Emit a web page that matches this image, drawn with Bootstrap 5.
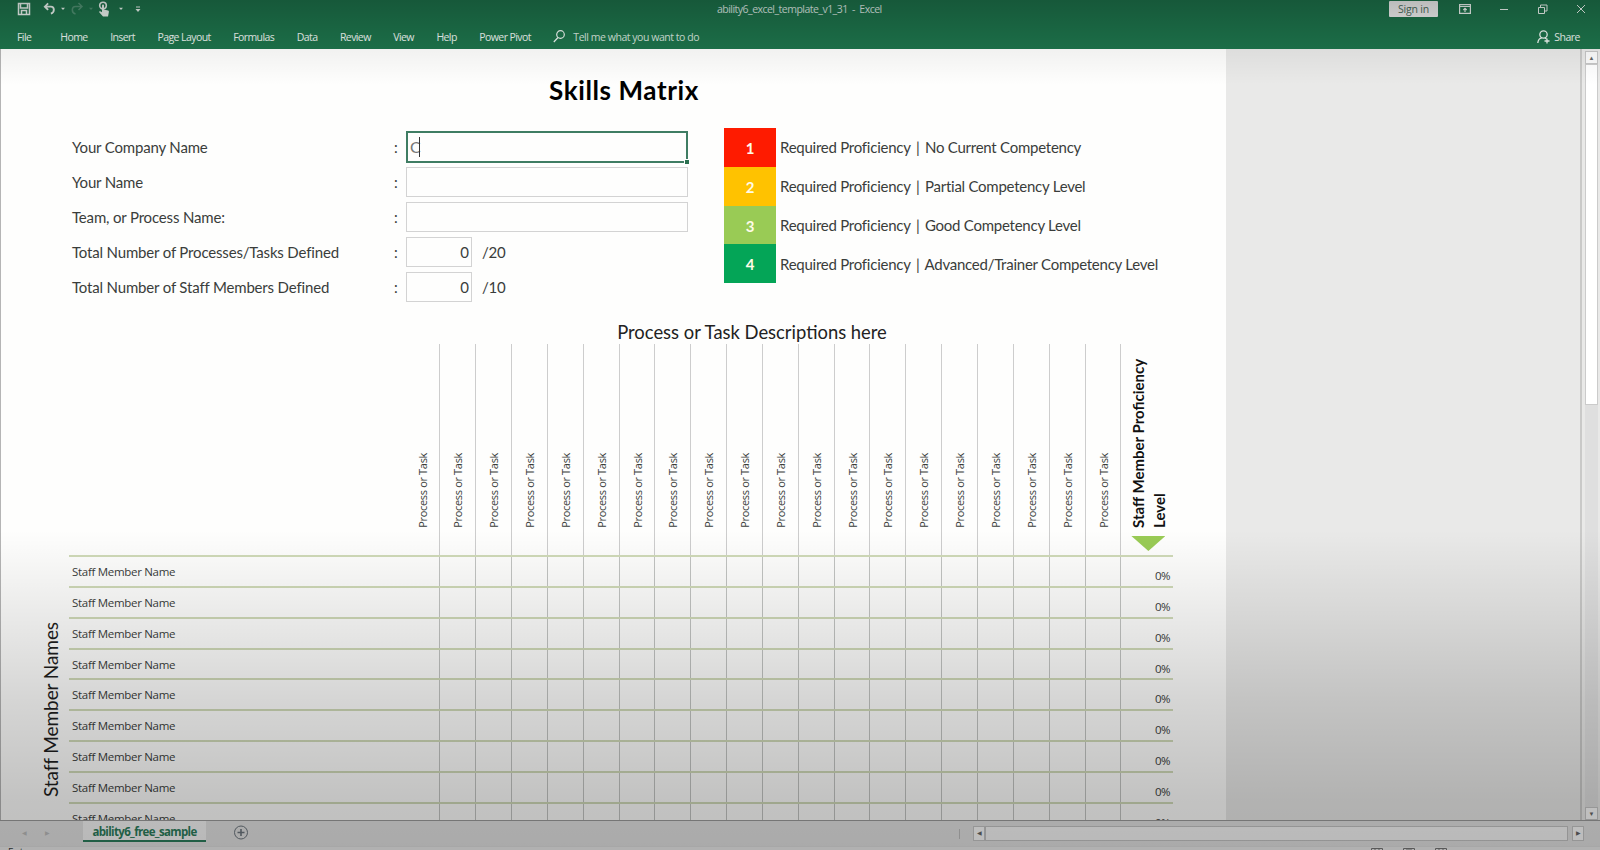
<!DOCTYPE html>
<html lang="en">
  <head>
    <meta charset="utf-8" />
    <title>ability6_excel_template_v1_31 - Excel</title>
    <link
      href="https://cdn.jsdelivr.net/npm/bootstrap@5.3.3/dist/css/bootstrap.min.css"
      rel="stylesheet"
    />
    <style>
      body {
        width: 1600px;
        height: 850px;
        overflow: hidden;
        font-family: Lato, "Open Sans", sans-serif;
        color: #3a3d3b;
        background: #e9e9e8;
      }
      svg {
        display: block;
        fill: none;
        stroke: currentColor;
      }

      /* ribbon */
      .ribbon {
        height: 49px;
        background: #1d734b;
        color: #eef7f2;
        font-family: "Open Sans", sans-serif;
        font-size: 10.5px;
        line-height: 14px;
      }
      .title-row {
        height: 18px;
      }
      .quick {
        width: 717px;
        padding-left: 17px;
      }
      .doc-title {
        letter-spacing: -0.52px;
        color: #dbe9e1;
        white-space: pre;
      }
      .sign-in {
        width: 49px;
        height: 16px;
        padding: 0;
        font-size: 10.5px;
        line-height: 15px;
        letter-spacing: -0.2px;
        background: #f3f3f3;
        color: #4f6f60;
        border-radius: 1px;
      }
      .window-icons {
        gap: 28px;
        margin-left: 21px;
        margin-right: 14px;
      }
      .tab-row {
        height: 31px;
        padding-left: 17px;
        padding-top: 6px;
      }
      .tab-row .nav-link {
        padding: 0;
        margin-right: 22.5px;
        color: #eef7f2;
        letter-spacing: -0.58px;
      }
      .tab-row .nav-link.file-tab {
        margin-right: 29px;
      }
      .tell-me {
        letter-spacing: -0.46px;
        color: #d5e6dd;
      }
      .share-link {
        margin-right: 20px;
        letter-spacing: -0.5px;
      }

      /* worksheet */
      .workspace {
        height: 772px;
        border-bottom: 1px solid #9b9b9b;
      }
      .sheet {
        width: 1226px;
        background: #fefefd;
        border-left: 1px solid #b5b5b5;
        overflow: hidden;
      }
      .sheet-title {
        height: 79px;
        padding-top: 22px;
        padding-left: 21px;
        font-size: 26px;
        line-height: 38px;
        letter-spacing: 0.6px;
        color: #000;
      }
      .form-block {
        width: 723px;
        height: 197px;
        padding-left: 71px;
        padding-top: 1px;
        font-size: 15px;
      }
      .form-line {
        height: 35px;
      }
      .form-line .caption-text {
        width: 322px;
        padding-top: 2px;
        letter-spacing: -0.17px;
      }
      .colon {
        width: 12px;
        padding-top: 2px;
      }
      .unit {
        padding-top: 2px;
        letter-spacing: -0.2px;
      }
      .entry {
        width: 282px;
        height: 30px;
        border: 1px solid #d3d3d3;
        line-height: 28px;
        padding: 0 2px;
      }
      .entry.count {
        width: 66px;
        text-align: right;
        margin-right: 10px;
      }
      .entry.active {
        height: 32px;
        border: 2px solid #3f7d63;
        padding: 0 2px;
        font-size: 16px;
        color: #777;
        position: relative;
      }
      .caret {
        width: 1px;
        height: 20px;
        margin-top: 4px;
        margin-left: -2px;
        background: #333;
      }
      .fill-handle {
        position: absolute;
        right: -3px;
        bottom: -3px;
        width: 5px;
        height: 5px;
        background: #2b7050;
        border-left: 1px solid #fff;
        border-top: 1px solid #fff;
      }
      .legend-line {
        height: 38.8px;
        font-size: 15px;
        letter-spacing: -0.25px;
        white-space: pre;
      }
      .bar {
        margin: 0 2px;
      }
      .level {
        width: 52px;
        height: 100%;
        line-height: 40px;
        margin-right: 4px;
        color: #fffbe8;
      }
      .level-1 { background: #fe1b00; }
      .level-2 { background: #ffc200; }
      .level-3 { background: #99cb55; }
      .level-4 { background: #04a557; }

      /* matrix */
      .side-label {
        width: 68px;
        padding-top: 297px;
        padding-left: 35px;
      }
      .vertical {
        writing-mode: vertical-rl;
        transform: rotate(180deg);
        white-space: nowrap;
      }
      .side-label .vertical {
        font-size: 19px;
        line-height: 30px;
        letter-spacing: -0.08px;
        color: #1e1e1e;
      }
      .matrix {
        width: 1104px;
      }
      .matrix-title {
        height: 19px;
        padding-left: 262px;
        font-size: 18.4px;
        line-height: 14px;
        color: #222;
      }
      .head-line {
        height: 211px;
      }
      .lead-cell {
        width: 335.5px;
      }
      .task-cell {
        width: 35.85px;
        flex: none;
        border-right: 1px solid #cdcdcd;
      }
      .head-line .task-cell {
        padding-bottom: 27px;
        padding-left: 7px;
        font-family: "Open Sans", sans-serif;
        font-size: 11px;
        line-height: 22px;
        letter-spacing: -0.33px;
      }
      .score-head {
        padding-left: 7px;
        font-size: 15px;
        line-height: 20.5px;
        color: #111;
      }
      .score-head .vertical {
        height: 184px;
      }
      .marker {
        width: 34px;
        height: 15px;
        margin-left: 3px;
        margin-top: 8px;
        background: #99cb55;
        clip-path: polygon(0 0, 100% 0, 50% 100%);
      }
      .staff-line {
        height: 30.87px;
        border-top: 2px solid #d0dab8;
        font-family: "Open Sans", sans-serif;
        font-size: 11.5px;
        line-height: 30px;
      }
      .staff-line .lead-cell {
        padding-left: 3px;
        letter-spacing: -0.3px;
      }
      .staff-line .task-cell {
        border-color: #c2c4c2;
      }
      .score {
        padding-right: 3px;
        padding-top: 4px;
        letter-spacing: -0.6px;
      }

      /* scrollbars and bottom bars */
      .pane-edge {
        border-right: 2px solid #c9c9c8;
      }
      .v-scroll {
        width: 18px;
        padding: 2px 2px 0 3px;
      }
      .scroll-btn {
        background: #fbfbfb;
        border: 1px solid #c6c6c6;
        color: #666;
        font-size: 6px;
      }
      .v-scroll .scroll-btn {
        width: 13px;
        height: 13px;
      }
      .v-track {
        width: 13px;
        background: #dfdfdf;
      }
      .v-thumb {
        height: 341px;
        background: #fff;
        border: 1px solid #cbcbcb;
      }
      .sheet-bar {
        height: 25px;
        background: #e3e3e3;
        font-family: "Open Sans", sans-serif;
      }
      .sheet-nav {
        width: 83px;
        padding-left: 22px;
        gap: 18px;
        color: #bcbcbc;
        font-size: 6px;
      }
      .sheet-tab {
        width: 123px;
        height: 21px;
        background: #f6f6f6;
        border-bottom: 2px solid #2c7d5c;
        color: #2c7d5c;
        font-size: 11.5px;
        line-height: 22px;
        letter-spacing: -0.65px;
      }
      .h-scroll {
        margin-right: 16px;
      }
      .h-scroll .scroll-btn {
        width: 12px;
        height: 15px;
      }
      .h-split {
        width: 1px;
        height: 10px;
        margin-right: 13px;
        background: #bdbdbd;
      }
      .h-track {
        width: 583px;
        height: 15px;
        background: #f7f7f7;
        border: 1px solid #c4c4c4;
      }
      .status-bar {
        height: 4px;
        background: #ececec;
        border-top: 1px solid #dedede;
        overflow: hidden;
        font-family: "Open Sans", sans-serif;
        font-size: 10px;
        line-height: 10px;
      }
      .view-icons {
        gap: 20px;
        margin-right: 153px;
        color: #777;
      }

      /* light falling off towards the top and bottom of the window */
      .shade {
        position: absolute;
        inset: 0;
        pointer-events: none;
        background: linear-gradient(
          rgba(0, 0, 0, 0.23) 0,
          rgba(0, 0, 0, 0.05) 49px,
          rgba(0, 0, 0, 0) 85px,
          rgba(0, 0, 0, 0) 530px,
          rgba(0, 0, 0, 0.075) 610px,
          rgba(0, 0, 0, 0.16) 700px,
          rgba(0, 0, 0, 0.235) 800px,
          rgba(0, 0, 0, 0.25) 850px
        );
      }
    </style>
  </head>
  <body>
    <header class="ribbon">
      <div class="title-row d-flex align-items-center">
        <div class="quick d-flex align-items-center">
          <!-- save -->
          <svg width="14" height="14" viewBox="0 0 14 14" stroke-width="1.5">
            <path d="M1.500 1.500h11v11h-11zM3.500 1.500v4.500h7v-4.500M4.500 12.500v-4h5v4" />
          </svg>
          <!-- undo -->
          <svg class="ms-2 ps-1" width="17" height="14" viewBox="0 0 14 14" stroke-width="2">
            <path d="M5.500 1L2 4.500L5.500 8M2 4.500h6.500c4 0 4.500 6 0 7.500" />
          </svg>
          <svg class="ms-1" width="6" height="4" viewBox="0 0 6 4"><path d="M1 .8h4L3 3z" fill="currentColor" stroke="none" /></svg>
          <!-- redo -->
          <svg class="ms-1 opacity-25" width="14" height="14" viewBox="0 0 14 14" stroke-width="1.500">
            <path d="M8.500 1L12 4.500L8.500 8M12 4.500h-6.500c-4 0-4.500 6 0 7.500" />
          </svg>
          <svg class="ms-1 opacity-25" width="6" height="4" viewBox="0 0 6 4"><path d="M1 .8h4L3 3z" fill="currentColor" stroke="none" /></svg>
          <!-- touch mode -->
          <svg class="ms-1" width="12" height="16" viewBox="0 0 12 16">
            <circle cx="5" cy="4.500" r="3.300" stroke-width="1.600" />
            <path d="M4 4.500c0-1.500 2-1.500 2 0v4l4 1c1 .3 1 1 .8 2l-.8 4h-5l-4-4.500c.2-1 1.500-1 3 .3z" fill="currentColor" stroke="none" />
          </svg>
          <svg class="ms-2" width="6" height="4" viewBox="0 0 6 4"><path d="M1 .8h4L3 3z" fill="currentColor" stroke="none" /></svg>
          <svg class="ms-2" width="12" height="7" viewBox="0 0 8 7"><path d="M2 1h4" /><path d="M1.500 3h5L4 6z" fill="currentColor" stroke="none" /></svg>
        </div>
        <div class="doc-title">ability6_excel_template_v1_31  -  Excel</div>
        <button class="btn sign-in ms-auto">Sign in</button>
        <div class="window-icons d-flex align-items-center">
          <svg width="12" height="10" viewBox="0 0 12 10" stroke-width="1.200">
            <path d="M.6.6h10.800v8.800H.6zM.6 2.500h10.800M6 8V4.500M4.300 6L6 4.300L7.700 6" />
          </svg>
          <svg width="10" height="10" viewBox="0 0 10 10"><path d="M1 5.500h8" /></svg>
          <svg width="11" height="10" viewBox="0 0 11 10">
            <path d="M1.500 3.500h6v6h-6zM3.500 3.500v-2.500h6.500v6h-2.500" />
          </svg>
          <svg width="10" height="10" viewBox="0 0 10 10"><path d="M1 1l8 8M9 1l-8 8" /></svg>
        </div>
      </div>
      <nav class="tab-row nav align-items-center">
        <a class="nav-link file-tab">File</a>
        <a class="nav-link">Home</a>
        <a class="nav-link">Insert</a>
        <a class="nav-link">Page Layout</a>
        <a class="nav-link">Formulas</a>
        <a class="nav-link">Data</a>
        <a class="nav-link">Review</a>
        <a class="nav-link">View</a>
        <a class="nav-link">Help</a>
        <a class="nav-link">Power Pivot</a>
        <svg class="me-2" width="12" height="13" viewBox="0 0 12 13" stroke-width="1.200">
          <circle cx="7.500" cy="4.500" r="3.800" />
          <path d="M5 7.500L.8 12" />
        </svg>
        <span class="tell-me">Tell me what you want to do</span>
        <div class="share-link d-flex align-items-center ms-auto">
          <!-- person with a plus -->
          <svg class="me-1" width="13" height="14" viewBox="0 0 13 14" stroke-width="1.300">
            <circle cx="6.500" cy="4.500" r="3.700" />
            <path d="M.8 13c.3-3 2-5 4-5.200M8 8l1.500 1M10 8.500v5M7.500 11h5" />
          </svg>
          <span>Share</span>
        </div>
      </nav>
    </header>

    <main class="workspace d-flex">
      <div class="sheet">
        <div class="sheet-title fw-bold text-center">Skills Matrix</div>
        <div class="d-flex">
          <div class="form-block">
            <div class="form-line d-flex align-items-center">
              <div class="caption-text">Your Company Name</div>
              <div class="colon">:</div>
              <div class="entry active d-flex">
                C<span class="caret"></span><span class="fill-handle"></span>
              </div>
            </div>
            <div class="form-line d-flex align-items-center">
              <div class="caption-text">Your Name</div>
              <div class="colon">:</div>
              <div class="entry"></div>
            </div>
            <div class="form-line d-flex align-items-center">
              <div class="caption-text">Team, or Process Name:</div>
              <div class="colon">:</div>
              <div class="entry"></div>
            </div>
            <div class="form-line d-flex align-items-center">
              <div class="caption-text">Total Number of Processes/Tasks Defined</div>
              <div class="colon">:</div>
              <div class="entry count">0</div>
              <div class="unit">/20</div>
            </div>
            <div class="form-line d-flex align-items-center">
              <div class="caption-text">Total Number of Staff Members Defined</div>
              <div class="colon">:</div>
              <div class="entry count">0</div>
              <div class="unit">/10</div>
            </div>
          </div>
          <div class="legend">
            <div class="legend-line d-flex align-items-center"><div class="level level-1 fw-bold text-center">1</div><span>Required Proficiency <span class="bar">|</span> No Current Competency</span></div>
            <div class="legend-line d-flex align-items-center"><div class="level level-2 fw-bold text-center">2</div><span>Required Proficiency <span class="bar">|</span> Partial Competency Level</span></div>
            <div class="legend-line d-flex align-items-center"><div class="level level-3 fw-bold text-center">3</div><span>Required Proficiency <span class="bar">|</span> Good Competency Level</span></div>
            <div class="legend-line d-flex align-items-center"><div class="level level-4 fw-bold text-center">4</div><span>Required Proficiency <span class="bar">|</span> Advanced/Trainer Competency Level</span></div>
          </div>
        </div>
        <div class="d-flex">
          <div class="side-label">
            <div class="vertical">Staff Member Names</div>
          </div>
          <div class="matrix">
            <div class="matrix-title text-center">Process or Task Descriptions here</div>
            <div class="head-line d-flex" id="headLine">
              <div class="lead-cell"></div>
            </div>
            <div id="staffLines"></div>
          </div>
        </div>
      </div>
      <div class="pane-edge flex-grow-1"></div>
      <div class="v-scroll d-flex flex-column">
        <div class="scroll-btn d-flex align-items-center justify-content-center">&#9650;</div>
        <div class="v-track flex-grow-1"><div class="v-thumb"></div></div>
        <div class="scroll-btn d-flex align-items-center justify-content-center">&#9660;</div>
      </div>
    </main>

    <footer>
      <div class="sheet-bar d-flex">
        <div class="sheet-nav d-flex align-items-center"><span>&#9664;</span><span>&#9654;</span></div>
        <div class="sheet-tab fw-bold text-center">ability6_free_sample</div>
        <svg class="ms-4 mt-1 text-secondary" width="20" height="15" viewBox="0 0 20 15">
          <circle cx="11" cy="7.500" r="6.500" />
          <path d="M11 4v7M7.500 7.500h7" stroke-width="1.600" />
        </svg>
        <div class="h-scroll d-flex align-items-center ms-auto">
          <div class="h-split"></div>
          <div class="scroll-btn d-flex align-items-center justify-content-center">&#9664;</div>
          <div class="h-track"></div>
          <div class="scroll-btn d-flex align-items-center justify-content-center ms-1">&#9654;</div>
        </div>
      </div>
      <div class="status-bar d-flex align-items-start justify-content-between">
        <span class="ps-2">Enter</span>
        <div class="view-icons d-flex">
          <svg width="12" height="10"><path d="M.5 1.500h11v8h-11zM4 1v8M8 1v8" /></svg>
          <svg width="12" height="10"><path d="M.5 1.500h11v8h-11zM3 3h6" /></svg>
          <svg width="12" height="10"><path d="M.5 1.500h11v8h-11zM4 1v3M8 1v3" /></svg>
        </div>
      </div>
    </footer>
    <div class="shade"></div>

    <script src="https://cdn.jsdelivr.net/npm/bootstrap@5.3.3/dist/js/bootstrap.bundle.min.js"></script>
    <script>
      const headLine = document.querySelector("#headLine");
      const staffLines = document.querySelector("#staffLines");
      const taskCount = 20;
      const staffCount = 9;

      // Column headings
      for (let i = 0; i < taskCount; i++) {
        headLine.innerHTML += `
          <div class="task-cell d-flex align-items-end">
            <div class="vertical">Process or Task</div>
          </div>`;
      }
      headLine.innerHTML += `
        <div class="score-head fw-bold">
          <div class="vertical">Staff Member Proficiency<br />Level</div>
          <div class="marker"></div>
        </div>`;

      // One line for each staff member
      for (let i = 0; i < staffCount; i++) {
        staffLines.innerHTML += `
          <div class="staff-line d-flex">
            <div class="lead-cell">Staff Member Name</div>
            ${'<div class="task-cell"></div>'.repeat(taskCount)}
            <div class="score ms-auto">0%</div>
          </div>`;
      }
    </script>
  </body>
</html>
